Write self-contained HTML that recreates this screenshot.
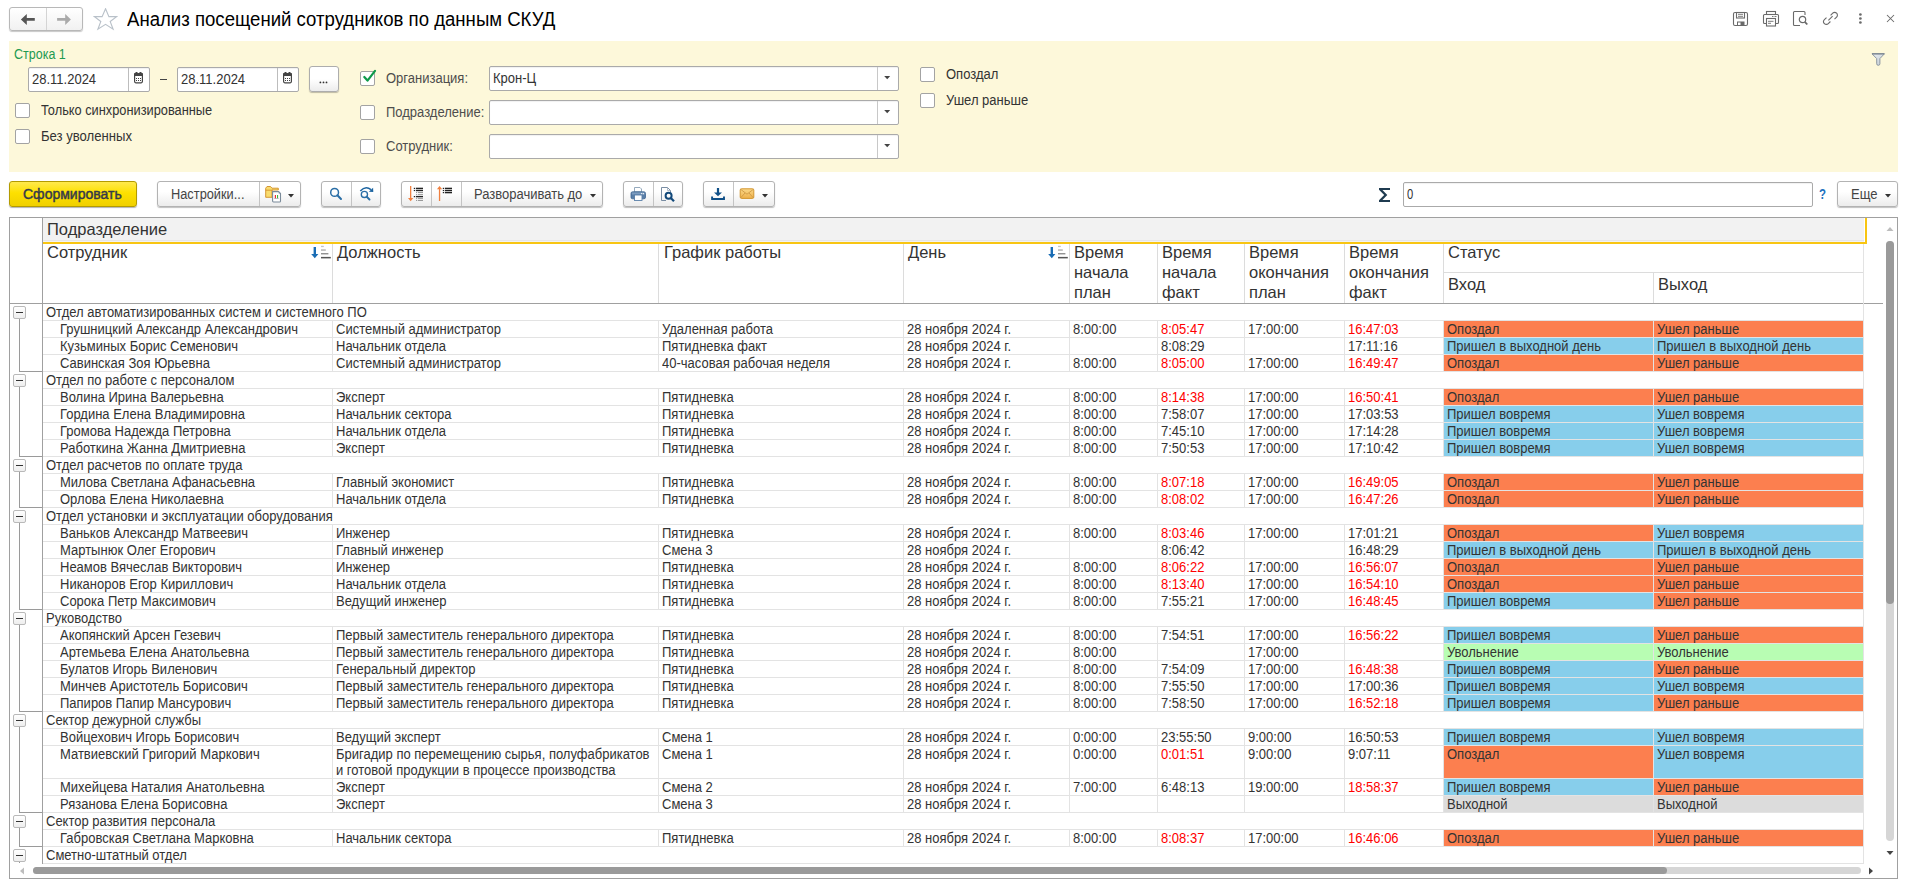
<!DOCTYPE html><html><head><meta charset="utf-8"><style>*{margin:0;padding:0}
html,body{width:1906px;height:882px;overflow:hidden;background:#fff}
body{position:relative;font-family:"Liberation Sans",sans-serif}
.a{position:absolute;box-sizing:content-box}
.t{white-space:nowrap}
.d{font-size:14px;line-height:16px;transform:scaleX(0.9286);transform-origin:0 0}
</style></head><body><div class="a" style="left:9px;top:7px;width:72px;height:22px;border:1px solid #b8b8b8;border-radius:3px;background:linear-gradient(#fff,#f1f1f1);box-shadow:0 1px 1px rgba(0,0,0,.22)"></div><div class="a" style="left:46px;top:8px;width:1px;height:22px;background:#d4d4d4"></div><svg class="a" style="left:20px;top:14px;" width="16" height="12" viewBox="0 0 16 12"><path d="M0.9 5.4 L6.8 0 V4.1 H14.8 V6.8 H6.8 V10.9 Z" fill="#555"/></svg><svg class="a" style="left:57px;top:14px;" width="16" height="12" viewBox="0 0 16 12"><path d="M13.9 5.4 L8.2 0.1 V4.1 H0.1 V6.8 H8.2 V10.9 Z" fill="#aaa"/></svg><svg class="a" style="left:93px;top:8px;" width="25" height="23" viewBox="0 0 25 23"><path d="M12.56 0.7 L15.9 8.6 L23.6 8.6 L17.2 13.5 L20.1 21.2 L12.56 16.3 L4.9 21.2 L7.8 13.5 L1.5 8.6 L9.1 8.6 Z" fill="none" stroke="#b9c1c9" stroke-width="1.1" stroke-linejoin="miter"/></svg><div class="a t" style="left:127px;top:6px;font-size:19.4px;line-height:26px;color:#000;font-weight:400;transform:scaleX(0.9588);transform-origin:0 0;">Анализ посещений сотрудников по данным СКУД</div><svg class="a" style="left:1732px;top:11px;" width="17" height="16" viewBox="0 0 17 16"><rect x="1.5" y="1.5" width="14" height="13" rx="1.5" fill="none" stroke="#6a6a6a" stroke-width="1.1"/><rect x="4.5" y="1.5" width="8" height="5.5" fill="none" stroke="#6a6a6a" stroke-width="1.1"/><line x1="6" y1="3.3" x2="11" y2="3.3" stroke="#6a6a6a" stroke-width="0.9"/><line x1="6" y1="5.3" x2="11" y2="5.3" stroke="#6a6a6a" stroke-width="0.9"/><rect x="5.5" y="11" width="6.5" height="3.5" fill="none" stroke="#6a6a6a" stroke-width="1"/><rect x="8.5" y="11" width="3.5" height="3.5" fill="#6a6a6a"/></svg><svg class="a" style="left:1762px;top:10px;" width="18" height="17" viewBox="0 0 18 17"><rect x="4.5" y="1.5" width="9" height="3" fill="none" stroke="#6a6a6a" stroke-width="1.1"/><path d="M4 13.5 H2.5 A1 1 0 0 1 1.5 12.5 V5.5 A1 1 0 0 1 2.5 4.5 H15.5 A1 1 0 0 1 16.5 5.5 V12.5 A1 1 0 0 1 15.5 13.5 H14" fill="none" stroke="#6a6a6a" stroke-width="1.1"/><rect x="4.5" y="8.5" width="9" height="7.5" fill="#fff" stroke="#6a6a6a" stroke-width="1.1"/><line x1="6" y1="11.3" x2="11.5" y2="11.3" stroke="#6a6a6a" stroke-width="0.9"/><line x1="6" y1="13.3" x2="9" y2="13.3" stroke="#6a6a6a" stroke-width="0.9"/><line x1="10" y1="6.5" x2="11.5" y2="6.5" stroke="#6a6a6a" stroke-width="0.9"/><line x1="12.5" y1="6.5" x2="14.5" y2="6.5" stroke="#6a6a6a" stroke-width="0.9"/></svg><svg class="a" style="left:1792px;top:10px;" width="18" height="17" viewBox="0 0 18 17"><path d="M8 15.5 H2.5 A1 1 0 0 1 1.5 14.5 V2.5 A1 1 0 0 1 2.5 1.5 H12 A1 1 0 0 1 13 2.5 V5" fill="none" stroke="#6a6a6a" stroke-width="1.1"/><circle cx="10.5" cy="9.5" r="3.2" fill="none" stroke="#6a6a6a" stroke-width="1.2"/><line x1="12.8" y1="11.8" x2="15.3" y2="14.5" stroke="#6a6a6a" stroke-width="1.8"/></svg><svg class="a" style="left:1822px;top:10px;" width="17" height="17" viewBox="0 0 17 17"><path d="M6.4 10.4 L10.6 6.2" stroke="#6a6a6a" stroke-width="1.1"/><path d="M8.6 5.3 L10.7 3.2 A2.75 2.75 0 0 1 14.6 7.1 L12.5 9.2" fill="none" stroke="#6a6a6a" stroke-width="1.1"/><path d="M8.4 11.5 L6.3 13.6 A2.75 2.75 0 0 1 2.4 9.7 L4.5 7.6" fill="none" stroke="#6a6a6a" stroke-width="1.1"/></svg><svg class="a" style="left:1857px;top:12px;" width="7" height="13" viewBox="0 0 7 13"><circle cx="3.4" cy="2.5" r="1.35" fill="#6a6a6a"/><circle cx="3.4" cy="6.5" r="1.35" fill="#6a6a6a"/><circle cx="3.4" cy="10.5" r="1.35" fill="#6a6a6a"/></svg><svg class="a" style="left:1886px;top:14px;" width="9" height="9" viewBox="0 0 9 9"><path d="M1 1 L8 8 M8 1 L1 8" stroke="#6a6a6a" stroke-width="1.05"/></svg><div class="a" style="left:9px;top:41px;width:1889px;height:131px;background:#fdf8da"></div><div class="a t" style="left:14px;top:46px;font-size:14px;line-height:16px;color:#1e9a52;font-weight:400;transform:scaleX(0.8929);transform-origin:0 0;">Строка 1</div><div class="a" style="left:28px;top:67px;width:120px;height:23px;border:1px solid #aaa;border-radius:2px;background:#fff;box-shadow:inset 0 1px 1px rgba(0,0,0,.06)"></div><div class="a" style="left:128px;top:68px;width:1px;height:23px;background:#bdbdbd"></div><svg class="a" style="left:134px;top:72px;" width="11" height="12" viewBox="0 0 11 12"><rect x="0.6" y="1.6" width="7.8" height="9.2" rx="1.2" fill="#fff" stroke="#444" stroke-width="1.2"/><rect x="0" y="1" width="9" height="3" rx="1" fill="#444"/><rect x="1.5" y="0" width="2" height="2" fill="#444"/><rect x="5.5" y="0" width="2" height="2" fill="#444"/><g fill="#444"><rect x="2" y="6" width="1" height="1"/><rect x="4" y="6" width="1" height="1"/><rect x="6" y="6" width="1" height="1"/><rect x="2" y="8" width="1" height="1"/><rect x="4" y="8" width="1" height="1"/><rect x="6" y="8" width="1" height="1"/></g></svg><div class="a t" style="left:32px;top:71px;font-size:14px;line-height:16px;color:#333;font-weight:400;transform:scaleX(0.9286);transform-origin:0 0;">28.11.2024</div><div class="a" style="left:160px;top:79px;width:7px;height:1px;background:#444"></div><div class="a" style="left:177px;top:67px;width:120px;height:23px;border:1px solid #aaa;border-radius:2px;background:#fff;box-shadow:inset 0 1px 1px rgba(0,0,0,.06)"></div><div class="a" style="left:277px;top:68px;width:1px;height:23px;background:#bdbdbd"></div><svg class="a" style="left:283px;top:72px;" width="11" height="12" viewBox="0 0 11 12"><rect x="0.6" y="1.6" width="7.8" height="9.2" rx="1.2" fill="#fff" stroke="#444" stroke-width="1.2"/><rect x="0" y="1" width="9" height="3" rx="1" fill="#444"/><rect x="1.5" y="0" width="2" height="2" fill="#444"/><rect x="5.5" y="0" width="2" height="2" fill="#444"/><g fill="#444"><rect x="2" y="6" width="1" height="1"/><rect x="4" y="6" width="1" height="1"/><rect x="6" y="6" width="1" height="1"/><rect x="2" y="8" width="1" height="1"/><rect x="4" y="8" width="1" height="1"/><rect x="6" y="8" width="1" height="1"/></g></svg><div class="a t" style="left:181px;top:71px;font-size:14px;line-height:16px;color:#333;font-weight:400;transform:scaleX(0.9286);transform-origin:0 0;">28.11.2024</div><div class="a" style="left:309px;top:66px;width:30px;height:26px;border:1px solid #adadad;border-radius:3px;background:linear-gradient(#fff 0%,#fff 50%,#ececec 100%);box-shadow:0 1px 1px rgba(0,0,0,.25);box-sizing:border-box"></div><svg class="a" style="left:319px;top:81px;" width="10" height="3" viewBox="0 0 10 3"><circle cx="1.4" cy="1.4" r="0.9" fill="#333"/><circle cx="4.5" cy="1.4" r="0.9" fill="#333"/><circle cx="7.5" cy="1.4" r="0.9" fill="#333"/></svg><div class="a" style="left:15px;top:103px;width:13px;height:13px;border:1px solid #a3a3a3;border-radius:2px;background:#fff"></div><div class="a t" style="left:41px;top:102px;font-size:14px;line-height:16px;color:#333;font-weight:400;transform:scaleX(0.9143);transform-origin:0 0;">Только синхронизированные</div><div class="a" style="left:15px;top:129px;width:13px;height:13px;border:1px solid #a3a3a3;border-radius:2px;background:#fff"></div><div class="a t" style="left:41px;top:128px;font-size:14px;line-height:16px;color:#333;font-weight:400;transform:scaleX(0.9357);transform-origin:0 0;">Без уволенных</div><div class="a" style="left:360px;top:71px;width:13px;height:13px;border:1px solid #a3a3a3;border-radius:2px;background:#fff"></div><svg class="a" style="left:361px;top:68px;" width="16" height="16" viewBox="0 0 16 16"><path d="M3.3 9 L6.5 12.6 L14 2.9" fill="none" stroke="#0e9a4a" stroke-width="2.2" stroke-linecap="round" stroke-linejoin="round"/></svg><div class="a t" style="left:386px;top:70px;font-size:14px;line-height:16px;color:#4d4d4d;font-weight:400;transform:scaleX(0.9286);transform-origin:0 0;">Организация:</div><div class="a" style="left:360px;top:105px;width:13px;height:13px;border:1px solid #a3a3a3;border-radius:2px;background:#fff"></div><div class="a t" style="left:386px;top:104px;font-size:14px;line-height:16px;color:#4d4d4d;font-weight:400;transform:scaleX(0.9286);transform-origin:0 0;">Подразделение:</div><div class="a" style="left:360px;top:139px;width:13px;height:13px;border:1px solid #a3a3a3;border-radius:2px;background:#fff"></div><div class="a t" style="left:386px;top:138px;font-size:14px;line-height:16px;color:#4d4d4d;font-weight:400;transform:scaleX(0.9286);transform-origin:0 0;">Сотрудник:</div><div class="a" style="left:489px;top:66px;width:408px;height:23px;border:1px solid #aaa;border-radius:2px;background:#fff;box-shadow:inset 0 1px 1px rgba(0,0,0,.06)"></div><div class="a" style="left:877px;top:67px;width:1px;height:23px;background:#c8c8c8"></div><svg class="a" style="left:884px;top:76px;" width="7" height="4" viewBox="0 0 7 4"><path d="M0.2 0 H6.2 L3.2 3.3 Z" fill="#444"/></svg><div class="a t" style="left:493px;top:70px;font-size:14px;line-height:16px;color:#333;font-weight:400;transform:scaleX(0.9286);transform-origin:0 0;">Крон-Ц</div><div class="a" style="left:489px;top:100px;width:408px;height:23px;border:1px solid #aaa;border-radius:2px;background:#fff;box-shadow:inset 0 1px 1px rgba(0,0,0,.06)"></div><div class="a" style="left:877px;top:101px;width:1px;height:23px;background:#c8c8c8"></div><svg class="a" style="left:884px;top:110px;" width="7" height="4" viewBox="0 0 7 4"><path d="M0.2 0 H6.2 L3.2 3.3 Z" fill="#444"/></svg><div class="a" style="left:489px;top:134px;width:408px;height:23px;border:1px solid #aaa;border-radius:2px;background:#fff;box-shadow:inset 0 1px 1px rgba(0,0,0,.06)"></div><div class="a" style="left:877px;top:135px;width:1px;height:23px;background:#c8c8c8"></div><svg class="a" style="left:884px;top:144px;" width="7" height="4" viewBox="0 0 7 4"><path d="M0.2 0 H6.2 L3.2 3.3 Z" fill="#444"/></svg><div class="a" style="left:920px;top:67px;width:13px;height:13px;border:1px solid #a3a3a3;border-radius:2px;background:#fff"></div><div class="a t" style="left:946px;top:66px;font-size:14px;line-height:16px;color:#333;font-weight:400;transform:scaleX(0.9286);transform-origin:0 0;">Опоздал</div><div class="a" style="left:920px;top:93px;width:13px;height:13px;border:1px solid #a3a3a3;border-radius:2px;background:#fff"></div><div class="a t" style="left:946px;top:92px;font-size:14px;line-height:16px;color:#333;font-weight:400;transform:scaleX(0.9286);transform-origin:0 0;">Ушел раньше</div><svg class="a" style="left:1870px;top:52px;" width="17" height="15" viewBox="0 0 17 15"><defs><linearGradient id="fg" x1="0" y1="0" x2="1" y2="1"><stop offset="0" stop-color="#e9edf1"/><stop offset="1" stop-color="#c3ccd5"/></linearGradient></defs><path d="M2 1.8 H14.4 L9.9 6.6 V11.7 A1.6 1.6 0 0 1 6.7 11.7 V6.6 Z" fill="url(#fg)" stroke="#87919c" stroke-width="0.95" stroke-linejoin="round"/><line x1="2" y1="1.8" x2="14.4" y2="1.8" stroke="#7d8792" stroke-width="1.3"/></svg><div class="a" style="left:9px;top:181px;width:126px;height:24px;border:1px solid #b39b00;border-radius:3px;background:linear-gradient(#ffe94d 0%,#fde000 45%,#f0d000 100%);box-shadow:0 1px 1px rgba(0,0,0,.3)"></div><div class="a t" style="left:23px;top:186px;font-size:14px;line-height:16px;color:#34394a;font-weight:400;-webkit-text-stroke:0.45px #34394a;">Сформировать</div><div class="a" style="left:157px;top:181px;width:142px;height:24px;border:1px solid #b3b3b3;border-radius:3px;background:linear-gradient(#fff 0%,#fff 40%,#ececec 100%);box-shadow:0 1px 1px rgba(0,0,0,.25)"></div><div class="a" style="left:259px;top:182px;width:1px;height:24px;background:#c4c4c4"></div><div class="a t" style="left:171px;top:186px;font-size:14px;line-height:16px;color:#444;font-weight:400;transform:scaleX(0.9143);transform-origin:0 0;">Настройки...</div><svg class="a" style="left:264px;top:185px;" width="19" height="18" viewBox="0 0 19 18"><path d="M1.7 12.3 V3.2 L3 1.5 H6.5 L8 3.2 H14.3 V5 H8 V12.3 Z" fill="#f9dc6e" stroke="#d3922c" stroke-width="0.95" stroke-linejoin="round"/><line x1="1.7" y1="5.2" x2="8.5" y2="5.2" stroke="#d3922c" stroke-width="0.9"/><path d="M8.6 6.6 H14.6 L16.5 8.5 V16.2 A0.9 0.9 0 0 1 15.6 17 H9.5 A0.9 0.9 0 0 1 8.6 16.1 Z" fill="#fff" stroke="#7a8a99" stroke-width="1.1"/><path d="M14.6 6.6 L16.5 8.5 H14.6 Z" fill="#8a99a8"/><rect x="10.8" y="10" width="1.2" height="3.3" fill="#ee3030"/><rect x="13" y="10" width="1.1" height="3.3" fill="#3cb83c"/><rect x="10.2" y="13.3" width="4.5" height="0.5" fill="#8a7f99"/></svg><svg class="a" style="left:288px;top:194px;" width="7" height="4" viewBox="0 0 7 4"><path d="M0 0 H6 L3 3.5 Z" fill="#333"/></svg><div class="a" style="left:321px;top:181px;width:58px;height:24px;border:1px solid #b3b3b3;border-radius:3px;background:linear-gradient(#fff 0%,#fff 40%,#ececec 100%);box-shadow:0 1px 1px rgba(0,0,0,.25)"></div><div class="a" style="left:351px;top:182px;width:1px;height:24px;background:#c4c4c4"></div><svg class="a" style="left:329px;top:187px;" width="14" height="14" viewBox="0 0 14 14"><circle cx="5.6" cy="5.4" r="3.9" fill="none" stroke="#2a6ea6" stroke-width="1.5"/><line x1="8.4" y1="8.3" x2="12" y2="12" stroke="#2a6ea6" stroke-width="2" stroke-linecap="round"/></svg><svg class="a" style="left:359px;top:186px;" width="16" height="16" viewBox="0 0 16 16"><path d="M1.3 5 Q6.5 -0.8 12 3.6" fill="none" stroke="#1c64a0" stroke-width="1.5"/><path d="M9.8 5.8 L14.1 1.8 L14.3 6.1 Z" fill="#1c64a0"/><circle cx="5.4" cy="8.4" r="3.1" fill="none" stroke="#2a6ea6" stroke-width="1.35"/><line x1="7.7" y1="10.8" x2="10.5" y2="13.5" stroke="#2a6ea6" stroke-width="1.9" stroke-linecap="round"/></svg><div class="a" style="left:401px;top:181px;width:200px;height:24px;border:1px solid #b3b3b3;border-radius:3px;background:linear-gradient(#fff 0%,#fff 40%,#ececec 100%);box-shadow:0 1px 1px rgba(0,0,0,.25)"></div><div class="a" style="left:431px;top:182px;width:1px;height:24px;background:#c4c4c4"></div><div class="a" style="left:461px;top:182px;width:1px;height:24px;background:#c4c4c4"></div><svg class="a" style="left:404px;top:184px;" width="22" height="20" viewBox="0 0 22 20"><rect x="6" y="2" width="1.3" height="13.5" fill="#f08040"/><path d="M4 14 H9.3 L6.65 17.2 Z" fill="#f08040"/><g fill="#222"><rect x="9.8" y="3.8" width="1.2" height="1.2"/><rect x="11.8" y="3.7" width="7.2" height="1.4"/><rect x="9.8" y="5.9" width="1.2" height="1.2"/><rect x="11.8" y="5.8" width="7.2" height="1.4"/><rect x="9.8" y="12" width="1.2" height="1.2"/><rect x="11.8" y="11.9" width="7.2" height="1.4"/></g><g fill="#999"><rect x="12" y="8" width="1" height="1"/><rect x="13.8" y="8" width="5.2" height="1"/><rect x="12" y="9.9" width="1" height="1"/><rect x="13.8" y="9.9" width="5.2" height="1"/><rect x="12" y="14.1" width="1" height="1"/><rect x="13.8" y="14.1" width="5.2" height="1"/><rect x="12" y="16" width="1" height="1"/><rect x="13.8" y="16" width="5.2" height="1"/></g></svg><svg class="a" style="left:433px;top:184px;" width="22" height="20" viewBox="0 0 22 20"><rect x="5.9" y="4" width="1.3" height="13" fill="#f08040"/><path d="M3.9 5.3 H9.2 L6.55 2 Z" fill="#f08040"/><g fill="#222"><rect x="9.8" y="3.8" width="1.2" height="1.2"/><rect x="11.8" y="3.7" width="7.2" height="1.4"/><rect x="9.8" y="5.9" width="1.2" height="1.2"/><rect x="11.8" y="5.8" width="7.2" height="1.4"/><rect x="9.8" y="8" width="1.2" height="1.2"/><rect x="11.8" y="7.9" width="7.2" height="1.4"/></g></svg><div class="a t" style="left:474px;top:186px;font-size:14px;line-height:16px;color:#444;font-weight:400;transform:scaleX(0.9286);transform-origin:0 0;">Разворачивать до</div><svg class="a" style="left:590px;top:194px;" width="7" height="4" viewBox="0 0 7 4"><path d="M0 0 H6 L3 3.5 Z" fill="#333"/></svg><div class="a" style="left:623px;top:181px;width:58px;height:24px;border:1px solid #b3b3b3;border-radius:3px;background:linear-gradient(#fff 0%,#fff 40%,#ececec 100%);box-shadow:0 1px 1px rgba(0,0,0,.25)"></div><div class="a" style="left:653px;top:182px;width:1px;height:24px;background:#c4c4c4"></div><svg class="a" style="left:630px;top:186px;" width="17" height="16" viewBox="0 0 17 16"><path d="M4.5 1.5 H10 L11.5 3 V6 H4.5 Z" fill="#fff" stroke="#8aa0b5" stroke-width="0.9"/><rect x="1" y="5.8" width="14.5" height="7" rx="1.6" fill="#5a7fa8" stroke="#3f6590" stroke-width="0.8"/><rect x="2" y="6.5" width="12.5" height="2" fill="#7e9dc0"/><rect x="11" y="7.2" width="1.2" height="1" fill="#fff"/><rect x="12.8" y="7.2" width="1.2" height="1" fill="#fff"/><rect x="4.5" y="9" width="7.5" height="5.5" fill="#fff" stroke="#5a7fa8" stroke-width="0.9"/></svg><svg class="a" style="left:659px;top:186px;" width="17" height="17" viewBox="0 0 17 17"><path d="M7 14.5 H2.5 V1.5 H8.5 L11.5 4.5 V6.5" fill="none" stroke="#6a8099" stroke-width="0.9"/><path d="M8.5 1.5 V4.5 H11.5" fill="none" stroke="#9aaabb" stroke-width="0.8"/><circle cx="9.6" cy="9.8" r="3" fill="none" stroke="#12497a" stroke-width="2"/><line x1="11.8" y1="12" x2="15" y2="15.3" stroke="#12497a" stroke-width="2.2"/></svg><div class="a" style="left:703px;top:181px;width:70px;height:24px;border:1px solid #b3b3b3;border-radius:3px;background:linear-gradient(#fff 0%,#fff 40%,#ececec 100%);box-shadow:0 1px 1px rgba(0,0,0,.25)"></div><div class="a" style="left:733px;top:182px;width:1px;height:24px;background:#c4c4c4"></div><svg class="a" style="left:710px;top:186px;" width="16" height="16" viewBox="0 0 16 16"><path d="M8 2 V8" stroke="#0f4f88" stroke-width="2.2"/><path d="M4 6.5 L8 10.2 L12 6.5 Z" fill="#0f4f88"/><path d="M2.1 10.5 V13 H14 V10.5" fill="none" stroke="#0f4f88" stroke-width="1.9"/></svg><svg class="a" style="left:739px;top:188px;" width="17" height="12" viewBox="0 0 17 12"><defs><linearGradient id="eg" x1="0" y1="0" x2="0" y2="1"><stop offset="0" stop-color="#fbd98a"/><stop offset="1" stop-color="#eeb04a"/></linearGradient></defs><rect x="1.2" y="0.8" width="13.6" height="9.6" rx="1.3" fill="url(#eg)" stroke="#d3962f" stroke-width="1"/><path d="M1.5 1.2 L8 6.2 L14.5 1.2 M1.5 10 L6 5 M14.5 10 L10 5" fill="none" stroke="#cf9a45" stroke-width="0.9"/></svg><svg class="a" style="left:762px;top:194px;" width="7" height="4" viewBox="0 0 7 4"><path d="M0 0 H6 L3 3.5 Z" fill="#333"/></svg><svg class="a" style="left:1378px;top:188px;" width="13" height="15" viewBox="0 0 13 15"><path d="M1 0 H12 V2 H4.4 L9.3 7 L4.4 12 H12 V14 H1 V12.2 L6.2 7 L1 1.8 Z" fill="#1f3b50"/></svg><div class="a" style="left:1403px;top:182px;width:408px;height:23px;border:1px solid #aaa;border-radius:2px;background:#fff;box-shadow:inset 0 1px 1px rgba(0,0,0,.06)"></div><div class="a t" style="left:1407px;top:186px;font-size:14px;line-height:16px;color:#333;font-weight:400;transform:scaleX(0.8);transform-origin:0 0;">0</div><div class="a t" style="left:1819px;top:186px;font-size:14px;line-height:16px;color:#1f72c0;font-weight:700;transform:scaleX(0.82);transform-origin:0 0;">?</div><div class="a" style="left:1837px;top:181px;width:59px;height:24px;border:1px solid #b3b3b3;border-radius:3px;background:linear-gradient(#fff 0%,#fff 40%,#ececec 100%);box-shadow:0 1px 1px rgba(0,0,0,.25)"></div><div class="a t" style="left:1851px;top:186px;font-size:14px;line-height:16px;color:#444;font-weight:400;transform:scaleX(0.9286);transform-origin:0 0;">Еще</div><svg class="a" style="left:1885px;top:194px;" width="7" height="4" viewBox="0 0 7 4"><path d="M0 0 H6 L3 3.5 Z" fill="#333"/></svg><div class="a" style="left:9px;top:217px;width:1888px;height:661px;border:1px solid #a0a0a0;background:#fff;box-sizing:content-box;width:1887px;height:660px"></div><div class="a" style="left:43px;top:218px;width:1821px;height:24px;background:#f2f2f2"></div><div class="a" style="left:43px;top:240px;width:1821px;height:1px;background:#e6e6e6"></div><div class="a" style="left:43px;top:242px;width:1824px;height:2px;background:#f8c512"></div><div class="a" style="left:1865px;top:218px;width:2px;height:26px;background:#f8c512"></div><div class="a t" style="left:47px;top:219px;font-size:16.5px;line-height:20px;color:#333;font-weight:400;">Подразделение</div><div class="a" style="left:42px;top:218px;width:1px;height:646px;background:#a0a0a0"></div><div class="a" style="left:10px;top:303px;width:1873px;height:1px;background:#a0a0a0"></div><div class="a" style="left:332px;top:244px;width:1px;height:59px;background:#dcdcdc"></div><div class="a" style="left:658px;top:244px;width:1px;height:59px;background:#dcdcdc"></div><div class="a" style="left:903px;top:244px;width:1px;height:59px;background:#dcdcdc"></div><div class="a" style="left:1069px;top:244px;width:1px;height:59px;background:#dcdcdc"></div><div class="a" style="left:1157px;top:244px;width:1px;height:59px;background:#dcdcdc"></div><div class="a" style="left:1244px;top:244px;width:1px;height:59px;background:#dcdcdc"></div><div class="a" style="left:1344px;top:244px;width:1px;height:59px;background:#dcdcdc"></div><div class="a" style="left:1443px;top:244px;width:1px;height:59px;background:#dcdcdc"></div><div class="a" style="left:1863px;top:244px;width:1px;height:59px;background:#dcdcdc"></div><div class="a" style="left:1444px;top:272px;width:420px;height:1px;background:#dcdcdc"></div><div class="a t" style="left:47px;top:242px;font-size:16.5px;line-height:20px;color:#333;font-weight:400;">Сотрудник</div><div class="a t" style="left:337px;top:242px;font-size:16.5px;line-height:20px;color:#333;font-weight:400;">Должность</div><div class="a t" style="left:664px;top:242px;font-size:16.5px;line-height:20px;color:#333;font-weight:400;">График работы</div><div class="a t" style="left:908px;top:242px;font-size:16.5px;line-height:20px;color:#333;font-weight:400;">День</div><div class="a t" style="left:1074px;top:242px;font-size:16.5px;line-height:20px;color:#333;font-weight:400;">Время<br>начала<br>план</div><div class="a t" style="left:1162px;top:242px;font-size:16.5px;line-height:20px;color:#333;font-weight:400;">Время<br>начала<br>факт</div><div class="a t" style="left:1249px;top:242px;font-size:16.5px;line-height:20px;color:#333;font-weight:400;">Время<br>окончания<br>план</div><div class="a t" style="left:1349px;top:242px;font-size:16.5px;line-height:20px;color:#333;font-weight:400;">Время<br>окончания<br>факт</div><div class="a t" style="left:1448px;top:242px;font-size:16.5px;line-height:20px;color:#333;font-weight:400;">Статус</div><div class="a t" style="left:1448px;top:274px;font-size:16.5px;line-height:20px;color:#333;font-weight:400;">Вход</div><div class="a t" style="left:1658px;top:274px;font-size:16.5px;line-height:20px;color:#333;font-weight:400;">Выход</div><div class="a" style="left:1653px;top:273px;width:1px;height:30px;background:#dcdcdc"></div><svg class="a" style="left:309px;top:244px;" width="24" height="16" viewBox="0 0 24 16"><rect x="4.6" y="3" width="2.4" height="8" fill="#1a6db5"/><path d="M2.2 10 H9.4 L5.8 14.2 Z" fill="#1a6db5"/><rect x="12" y="1.8" width="2.8" height="1.3" fill="#c4c4c4"/><rect x="12" y="5.4" width="4.8" height="1.3" fill="#a8a8a8"/><rect x="12" y="9.1" width="7.4" height="1.3" fill="#888"/><rect x="12" y="12.9" width="9.8" height="1.5" fill="#555"/></svg><svg class="a" style="left:1046px;top:244px;" width="24" height="16" viewBox="0 0 24 16"><rect x="4.6" y="3" width="2.4" height="8" fill="#1a6db5"/><path d="M2.2 10 H9.4 L5.8 14.2 Z" fill="#1a6db5"/><rect x="12" y="1.8" width="2.8" height="1.3" fill="#c4c4c4"/><rect x="12" y="5.4" width="4.8" height="1.3" fill="#a8a8a8"/><rect x="12" y="9.1" width="7.4" height="1.3" fill="#888"/><rect x="12" y="12.9" width="9.8" height="1.5" fill="#555"/></svg><div class="a t d" style="left:46px;top:304px;color:#333">Отдел автоматизированных систем и системного ПО</div><div class="a" style="left:43px;top:320px;width:1821px;height:1px;background:#e3e3e3"></div><div class="a" style="left:1444px;top:321px;width:209px;height:16px;background:#fc7f4f"></div><div class="a" style="left:1654px;top:321px;width:209px;height:16px;background:#fc7f4f"></div><div class="a t d" style="left:60px;top:321px;color:#333">Грушницкий Александр Александрович</div><div class="a t d" style="left:336px;top:321px;color:#333">Системный администратор</div><div class="a t d" style="left:662px;top:321px;color:#333">Удаленная работа</div><div class="a t d" style="left:907px;top:321px;color:#333">28 ноября 2024 г.</div><div class="a t d" style="left:1073px;top:321px;color:#333">8:00:00</div><div class="a t d" style="left:1161px;top:321px;color:#f00">8:05:47</div><div class="a t d" style="left:1248px;top:321px;color:#333">17:00:00</div><div class="a t d" style="left:1348px;top:321px;color:#f00">16:47:03</div><div class="a t d" style="left:1447px;top:321px;color:#333">Опоздал</div><div class="a t d" style="left:1657px;top:321px;color:#333">Ушел раньше</div><div class="a" style="left:332px;top:321px;width:1px;height:16px;background:#e3e3e3"></div><div class="a" style="left:658px;top:321px;width:1px;height:16px;background:#e3e3e3"></div><div class="a" style="left:903px;top:321px;width:1px;height:16px;background:#e3e3e3"></div><div class="a" style="left:1069px;top:321px;width:1px;height:16px;background:#e3e3e3"></div><div class="a" style="left:1157px;top:321px;width:1px;height:16px;background:#e3e3e3"></div><div class="a" style="left:1244px;top:321px;width:1px;height:16px;background:#e3e3e3"></div><div class="a" style="left:1344px;top:321px;width:1px;height:16px;background:#e3e3e3"></div><div class="a" style="left:1443px;top:321px;width:1px;height:16px;background:#e3e3e3"></div><div class="a" style="left:1653px;top:321px;width:1px;height:16px;background:#e3e3e3"></div><div class="a" style="left:1863px;top:321px;width:1px;height:16px;background:#e3e3e3"></div><div class="a" style="left:43px;top:337px;width:1821px;height:1px;background:#e3e3e3"></div><div class="a" style="left:1444px;top:338px;width:209px;height:16px;background:#87ceeb"></div><div class="a" style="left:1654px;top:338px;width:209px;height:16px;background:#87ceeb"></div><div class="a t d" style="left:60px;top:338px;color:#333">Кузьминых Борис Семенович</div><div class="a t d" style="left:336px;top:338px;color:#333">Начальник отдела</div><div class="a t d" style="left:662px;top:338px;color:#333">Пятидневка факт</div><div class="a t d" style="left:907px;top:338px;color:#333">28 ноября 2024 г.</div><div class="a t d" style="left:1161px;top:338px;color:#333">8:08:29</div><div class="a t d" style="left:1348px;top:338px;color:#333">17:11:16</div><div class="a t d" style="left:1447px;top:338px;color:#333">Пришел в выходной день</div><div class="a t d" style="left:1657px;top:338px;color:#333">Пришел в выходной день</div><div class="a" style="left:332px;top:338px;width:1px;height:16px;background:#e3e3e3"></div><div class="a" style="left:658px;top:338px;width:1px;height:16px;background:#e3e3e3"></div><div class="a" style="left:903px;top:338px;width:1px;height:16px;background:#e3e3e3"></div><div class="a" style="left:1069px;top:338px;width:1px;height:16px;background:#e3e3e3"></div><div class="a" style="left:1157px;top:338px;width:1px;height:16px;background:#e3e3e3"></div><div class="a" style="left:1244px;top:338px;width:1px;height:16px;background:#e3e3e3"></div><div class="a" style="left:1344px;top:338px;width:1px;height:16px;background:#e3e3e3"></div><div class="a" style="left:1443px;top:338px;width:1px;height:16px;background:#e3e3e3"></div><div class="a" style="left:1653px;top:338px;width:1px;height:16px;background:#e3e3e3"></div><div class="a" style="left:1863px;top:338px;width:1px;height:16px;background:#e3e3e3"></div><div class="a" style="left:43px;top:354px;width:1821px;height:1px;background:#e3e3e3"></div><div class="a" style="left:1444px;top:355px;width:209px;height:16px;background:#fc7f4f"></div><div class="a" style="left:1654px;top:355px;width:209px;height:16px;background:#fc7f4f"></div><div class="a t d" style="left:60px;top:355px;color:#333">Савинская Зоя Юрьевна</div><div class="a t d" style="left:336px;top:355px;color:#333">Системный администратор</div><div class="a t d" style="left:662px;top:355px;color:#333">40-часовая рабочая неделя</div><div class="a t d" style="left:907px;top:355px;color:#333">28 ноября 2024 г.</div><div class="a t d" style="left:1073px;top:355px;color:#333">8:00:00</div><div class="a t d" style="left:1161px;top:355px;color:#f00">8:05:00</div><div class="a t d" style="left:1248px;top:355px;color:#333">17:00:00</div><div class="a t d" style="left:1348px;top:355px;color:#f00">16:49:47</div><div class="a t d" style="left:1447px;top:355px;color:#333">Опоздал</div><div class="a t d" style="left:1657px;top:355px;color:#333">Ушел раньше</div><div class="a" style="left:332px;top:355px;width:1px;height:16px;background:#e3e3e3"></div><div class="a" style="left:658px;top:355px;width:1px;height:16px;background:#e3e3e3"></div><div class="a" style="left:903px;top:355px;width:1px;height:16px;background:#e3e3e3"></div><div class="a" style="left:1069px;top:355px;width:1px;height:16px;background:#e3e3e3"></div><div class="a" style="left:1157px;top:355px;width:1px;height:16px;background:#e3e3e3"></div><div class="a" style="left:1244px;top:355px;width:1px;height:16px;background:#e3e3e3"></div><div class="a" style="left:1344px;top:355px;width:1px;height:16px;background:#e3e3e3"></div><div class="a" style="left:1443px;top:355px;width:1px;height:16px;background:#e3e3e3"></div><div class="a" style="left:1653px;top:355px;width:1px;height:16px;background:#e3e3e3"></div><div class="a" style="left:1863px;top:355px;width:1px;height:16px;background:#e3e3e3"></div><div class="a" style="left:43px;top:371px;width:1821px;height:1px;background:#e3e3e3"></div><div class="a t d" style="left:46px;top:372px;color:#333">Отдел по работе с персоналом</div><div class="a" style="left:43px;top:388px;width:1821px;height:1px;background:#e3e3e3"></div><div class="a" style="left:1444px;top:389px;width:209px;height:16px;background:#fc7f4f"></div><div class="a" style="left:1654px;top:389px;width:209px;height:16px;background:#fc7f4f"></div><div class="a t d" style="left:60px;top:389px;color:#333">Волина Ирина Валерьевна</div><div class="a t d" style="left:336px;top:389px;color:#333">Эксперт</div><div class="a t d" style="left:662px;top:389px;color:#333">Пятидневка</div><div class="a t d" style="left:907px;top:389px;color:#333">28 ноября 2024 г.</div><div class="a t d" style="left:1073px;top:389px;color:#333">8:00:00</div><div class="a t d" style="left:1161px;top:389px;color:#f00">8:14:38</div><div class="a t d" style="left:1248px;top:389px;color:#333">17:00:00</div><div class="a t d" style="left:1348px;top:389px;color:#f00">16:50:41</div><div class="a t d" style="left:1447px;top:389px;color:#333">Опоздал</div><div class="a t d" style="left:1657px;top:389px;color:#333">Ушел раньше</div><div class="a" style="left:332px;top:389px;width:1px;height:16px;background:#e3e3e3"></div><div class="a" style="left:658px;top:389px;width:1px;height:16px;background:#e3e3e3"></div><div class="a" style="left:903px;top:389px;width:1px;height:16px;background:#e3e3e3"></div><div class="a" style="left:1069px;top:389px;width:1px;height:16px;background:#e3e3e3"></div><div class="a" style="left:1157px;top:389px;width:1px;height:16px;background:#e3e3e3"></div><div class="a" style="left:1244px;top:389px;width:1px;height:16px;background:#e3e3e3"></div><div class="a" style="left:1344px;top:389px;width:1px;height:16px;background:#e3e3e3"></div><div class="a" style="left:1443px;top:389px;width:1px;height:16px;background:#e3e3e3"></div><div class="a" style="left:1653px;top:389px;width:1px;height:16px;background:#e3e3e3"></div><div class="a" style="left:1863px;top:389px;width:1px;height:16px;background:#e3e3e3"></div><div class="a" style="left:43px;top:405px;width:1821px;height:1px;background:#e3e3e3"></div><div class="a" style="left:1444px;top:406px;width:209px;height:16px;background:#87ceeb"></div><div class="a" style="left:1654px;top:406px;width:209px;height:16px;background:#87ceeb"></div><div class="a t d" style="left:60px;top:406px;color:#333">Гордина Елена Владимировна</div><div class="a t d" style="left:336px;top:406px;color:#333">Начальник сектора</div><div class="a t d" style="left:662px;top:406px;color:#333">Пятидневка</div><div class="a t d" style="left:907px;top:406px;color:#333">28 ноября 2024 г.</div><div class="a t d" style="left:1073px;top:406px;color:#333">8:00:00</div><div class="a t d" style="left:1161px;top:406px;color:#333">7:58:07</div><div class="a t d" style="left:1248px;top:406px;color:#333">17:00:00</div><div class="a t d" style="left:1348px;top:406px;color:#333">17:03:53</div><div class="a t d" style="left:1447px;top:406px;color:#333">Пришел вовремя</div><div class="a t d" style="left:1657px;top:406px;color:#333">Ушел вовремя</div><div class="a" style="left:332px;top:406px;width:1px;height:16px;background:#e3e3e3"></div><div class="a" style="left:658px;top:406px;width:1px;height:16px;background:#e3e3e3"></div><div class="a" style="left:903px;top:406px;width:1px;height:16px;background:#e3e3e3"></div><div class="a" style="left:1069px;top:406px;width:1px;height:16px;background:#e3e3e3"></div><div class="a" style="left:1157px;top:406px;width:1px;height:16px;background:#e3e3e3"></div><div class="a" style="left:1244px;top:406px;width:1px;height:16px;background:#e3e3e3"></div><div class="a" style="left:1344px;top:406px;width:1px;height:16px;background:#e3e3e3"></div><div class="a" style="left:1443px;top:406px;width:1px;height:16px;background:#e3e3e3"></div><div class="a" style="left:1653px;top:406px;width:1px;height:16px;background:#e3e3e3"></div><div class="a" style="left:1863px;top:406px;width:1px;height:16px;background:#e3e3e3"></div><div class="a" style="left:43px;top:422px;width:1821px;height:1px;background:#e3e3e3"></div><div class="a" style="left:1444px;top:423px;width:209px;height:16px;background:#87ceeb"></div><div class="a" style="left:1654px;top:423px;width:209px;height:16px;background:#87ceeb"></div><div class="a t d" style="left:60px;top:423px;color:#333">Громова Надежда Петровна</div><div class="a t d" style="left:336px;top:423px;color:#333">Начальник отдела</div><div class="a t d" style="left:662px;top:423px;color:#333">Пятидневка</div><div class="a t d" style="left:907px;top:423px;color:#333">28 ноября 2024 г.</div><div class="a t d" style="left:1073px;top:423px;color:#333">8:00:00</div><div class="a t d" style="left:1161px;top:423px;color:#333">7:45:10</div><div class="a t d" style="left:1248px;top:423px;color:#333">17:00:00</div><div class="a t d" style="left:1348px;top:423px;color:#333">17:14:28</div><div class="a t d" style="left:1447px;top:423px;color:#333">Пришел вовремя</div><div class="a t d" style="left:1657px;top:423px;color:#333">Ушел вовремя</div><div class="a" style="left:332px;top:423px;width:1px;height:16px;background:#e3e3e3"></div><div class="a" style="left:658px;top:423px;width:1px;height:16px;background:#e3e3e3"></div><div class="a" style="left:903px;top:423px;width:1px;height:16px;background:#e3e3e3"></div><div class="a" style="left:1069px;top:423px;width:1px;height:16px;background:#e3e3e3"></div><div class="a" style="left:1157px;top:423px;width:1px;height:16px;background:#e3e3e3"></div><div class="a" style="left:1244px;top:423px;width:1px;height:16px;background:#e3e3e3"></div><div class="a" style="left:1344px;top:423px;width:1px;height:16px;background:#e3e3e3"></div><div class="a" style="left:1443px;top:423px;width:1px;height:16px;background:#e3e3e3"></div><div class="a" style="left:1653px;top:423px;width:1px;height:16px;background:#e3e3e3"></div><div class="a" style="left:1863px;top:423px;width:1px;height:16px;background:#e3e3e3"></div><div class="a" style="left:43px;top:439px;width:1821px;height:1px;background:#e3e3e3"></div><div class="a" style="left:1444px;top:440px;width:209px;height:16px;background:#87ceeb"></div><div class="a" style="left:1654px;top:440px;width:209px;height:16px;background:#87ceeb"></div><div class="a t d" style="left:60px;top:440px;color:#333">Работкина Жанна Дмитриевна</div><div class="a t d" style="left:336px;top:440px;color:#333">Эксперт</div><div class="a t d" style="left:662px;top:440px;color:#333">Пятидневка</div><div class="a t d" style="left:907px;top:440px;color:#333">28 ноября 2024 г.</div><div class="a t d" style="left:1073px;top:440px;color:#333">8:00:00</div><div class="a t d" style="left:1161px;top:440px;color:#333">7:50:53</div><div class="a t d" style="left:1248px;top:440px;color:#333">17:00:00</div><div class="a t d" style="left:1348px;top:440px;color:#333">17:10:42</div><div class="a t d" style="left:1447px;top:440px;color:#333">Пришел вовремя</div><div class="a t d" style="left:1657px;top:440px;color:#333">Ушел вовремя</div><div class="a" style="left:332px;top:440px;width:1px;height:16px;background:#e3e3e3"></div><div class="a" style="left:658px;top:440px;width:1px;height:16px;background:#e3e3e3"></div><div class="a" style="left:903px;top:440px;width:1px;height:16px;background:#e3e3e3"></div><div class="a" style="left:1069px;top:440px;width:1px;height:16px;background:#e3e3e3"></div><div class="a" style="left:1157px;top:440px;width:1px;height:16px;background:#e3e3e3"></div><div class="a" style="left:1244px;top:440px;width:1px;height:16px;background:#e3e3e3"></div><div class="a" style="left:1344px;top:440px;width:1px;height:16px;background:#e3e3e3"></div><div class="a" style="left:1443px;top:440px;width:1px;height:16px;background:#e3e3e3"></div><div class="a" style="left:1653px;top:440px;width:1px;height:16px;background:#e3e3e3"></div><div class="a" style="left:1863px;top:440px;width:1px;height:16px;background:#e3e3e3"></div><div class="a" style="left:43px;top:456px;width:1821px;height:1px;background:#e3e3e3"></div><div class="a t d" style="left:46px;top:457px;color:#333">Отдел расчетов по оплате труда</div><div class="a" style="left:43px;top:473px;width:1821px;height:1px;background:#e3e3e3"></div><div class="a" style="left:1444px;top:474px;width:209px;height:16px;background:#fc7f4f"></div><div class="a" style="left:1654px;top:474px;width:209px;height:16px;background:#fc7f4f"></div><div class="a t d" style="left:60px;top:474px;color:#333">Милова Светлана Афанасьевна</div><div class="a t d" style="left:336px;top:474px;color:#333">Главный экономист</div><div class="a t d" style="left:662px;top:474px;color:#333">Пятидневка</div><div class="a t d" style="left:907px;top:474px;color:#333">28 ноября 2024 г.</div><div class="a t d" style="left:1073px;top:474px;color:#333">8:00:00</div><div class="a t d" style="left:1161px;top:474px;color:#f00">8:07:18</div><div class="a t d" style="left:1248px;top:474px;color:#333">17:00:00</div><div class="a t d" style="left:1348px;top:474px;color:#f00">16:49:05</div><div class="a t d" style="left:1447px;top:474px;color:#333">Опоздал</div><div class="a t d" style="left:1657px;top:474px;color:#333">Ушел раньше</div><div class="a" style="left:332px;top:474px;width:1px;height:16px;background:#e3e3e3"></div><div class="a" style="left:658px;top:474px;width:1px;height:16px;background:#e3e3e3"></div><div class="a" style="left:903px;top:474px;width:1px;height:16px;background:#e3e3e3"></div><div class="a" style="left:1069px;top:474px;width:1px;height:16px;background:#e3e3e3"></div><div class="a" style="left:1157px;top:474px;width:1px;height:16px;background:#e3e3e3"></div><div class="a" style="left:1244px;top:474px;width:1px;height:16px;background:#e3e3e3"></div><div class="a" style="left:1344px;top:474px;width:1px;height:16px;background:#e3e3e3"></div><div class="a" style="left:1443px;top:474px;width:1px;height:16px;background:#e3e3e3"></div><div class="a" style="left:1653px;top:474px;width:1px;height:16px;background:#e3e3e3"></div><div class="a" style="left:1863px;top:474px;width:1px;height:16px;background:#e3e3e3"></div><div class="a" style="left:43px;top:490px;width:1821px;height:1px;background:#e3e3e3"></div><div class="a" style="left:1444px;top:491px;width:209px;height:16px;background:#fc7f4f"></div><div class="a" style="left:1654px;top:491px;width:209px;height:16px;background:#fc7f4f"></div><div class="a t d" style="left:60px;top:491px;color:#333">Орлова Елена Николаевна</div><div class="a t d" style="left:336px;top:491px;color:#333">Начальник отдела</div><div class="a t d" style="left:662px;top:491px;color:#333">Пятидневка</div><div class="a t d" style="left:907px;top:491px;color:#333">28 ноября 2024 г.</div><div class="a t d" style="left:1073px;top:491px;color:#333">8:00:00</div><div class="a t d" style="left:1161px;top:491px;color:#f00">8:08:02</div><div class="a t d" style="left:1248px;top:491px;color:#333">17:00:00</div><div class="a t d" style="left:1348px;top:491px;color:#f00">16:47:26</div><div class="a t d" style="left:1447px;top:491px;color:#333">Опоздал</div><div class="a t d" style="left:1657px;top:491px;color:#333">Ушел раньше</div><div class="a" style="left:332px;top:491px;width:1px;height:16px;background:#e3e3e3"></div><div class="a" style="left:658px;top:491px;width:1px;height:16px;background:#e3e3e3"></div><div class="a" style="left:903px;top:491px;width:1px;height:16px;background:#e3e3e3"></div><div class="a" style="left:1069px;top:491px;width:1px;height:16px;background:#e3e3e3"></div><div class="a" style="left:1157px;top:491px;width:1px;height:16px;background:#e3e3e3"></div><div class="a" style="left:1244px;top:491px;width:1px;height:16px;background:#e3e3e3"></div><div class="a" style="left:1344px;top:491px;width:1px;height:16px;background:#e3e3e3"></div><div class="a" style="left:1443px;top:491px;width:1px;height:16px;background:#e3e3e3"></div><div class="a" style="left:1653px;top:491px;width:1px;height:16px;background:#e3e3e3"></div><div class="a" style="left:1863px;top:491px;width:1px;height:16px;background:#e3e3e3"></div><div class="a" style="left:43px;top:507px;width:1821px;height:1px;background:#e3e3e3"></div><div class="a t d" style="left:46px;top:508px;color:#333">Отдел установки и эксплуатации оборудования</div><div class="a" style="left:43px;top:524px;width:1821px;height:1px;background:#e3e3e3"></div><div class="a" style="left:1444px;top:525px;width:209px;height:16px;background:#fc7f4f"></div><div class="a" style="left:1654px;top:525px;width:209px;height:16px;background:#87ceeb"></div><div class="a t d" style="left:60px;top:525px;color:#333">Ваньков Александр Матвеевич</div><div class="a t d" style="left:336px;top:525px;color:#333">Инженер</div><div class="a t d" style="left:662px;top:525px;color:#333">Пятидневка</div><div class="a t d" style="left:907px;top:525px;color:#333">28 ноября 2024 г.</div><div class="a t d" style="left:1073px;top:525px;color:#333">8:00:00</div><div class="a t d" style="left:1161px;top:525px;color:#f00">8:03:46</div><div class="a t d" style="left:1248px;top:525px;color:#333">17:00:00</div><div class="a t d" style="left:1348px;top:525px;color:#333">17:01:21</div><div class="a t d" style="left:1447px;top:525px;color:#333">Опоздал</div><div class="a t d" style="left:1657px;top:525px;color:#333">Ушел вовремя</div><div class="a" style="left:332px;top:525px;width:1px;height:16px;background:#e3e3e3"></div><div class="a" style="left:658px;top:525px;width:1px;height:16px;background:#e3e3e3"></div><div class="a" style="left:903px;top:525px;width:1px;height:16px;background:#e3e3e3"></div><div class="a" style="left:1069px;top:525px;width:1px;height:16px;background:#e3e3e3"></div><div class="a" style="left:1157px;top:525px;width:1px;height:16px;background:#e3e3e3"></div><div class="a" style="left:1244px;top:525px;width:1px;height:16px;background:#e3e3e3"></div><div class="a" style="left:1344px;top:525px;width:1px;height:16px;background:#e3e3e3"></div><div class="a" style="left:1443px;top:525px;width:1px;height:16px;background:#e3e3e3"></div><div class="a" style="left:1653px;top:525px;width:1px;height:16px;background:#e3e3e3"></div><div class="a" style="left:1863px;top:525px;width:1px;height:16px;background:#e3e3e3"></div><div class="a" style="left:43px;top:541px;width:1821px;height:1px;background:#e3e3e3"></div><div class="a" style="left:1444px;top:542px;width:209px;height:16px;background:#87ceeb"></div><div class="a" style="left:1654px;top:542px;width:209px;height:16px;background:#87ceeb"></div><div class="a t d" style="left:60px;top:542px;color:#333">Мартынюк Олег Егорович</div><div class="a t d" style="left:336px;top:542px;color:#333">Главный инженер</div><div class="a t d" style="left:662px;top:542px;color:#333">Смена 3</div><div class="a t d" style="left:907px;top:542px;color:#333">28 ноября 2024 г.</div><div class="a t d" style="left:1161px;top:542px;color:#333">8:06:42</div><div class="a t d" style="left:1348px;top:542px;color:#333">16:48:29</div><div class="a t d" style="left:1447px;top:542px;color:#333">Пришел в выходной день</div><div class="a t d" style="left:1657px;top:542px;color:#333">Пришел в выходной день</div><div class="a" style="left:332px;top:542px;width:1px;height:16px;background:#e3e3e3"></div><div class="a" style="left:658px;top:542px;width:1px;height:16px;background:#e3e3e3"></div><div class="a" style="left:903px;top:542px;width:1px;height:16px;background:#e3e3e3"></div><div class="a" style="left:1069px;top:542px;width:1px;height:16px;background:#e3e3e3"></div><div class="a" style="left:1157px;top:542px;width:1px;height:16px;background:#e3e3e3"></div><div class="a" style="left:1244px;top:542px;width:1px;height:16px;background:#e3e3e3"></div><div class="a" style="left:1344px;top:542px;width:1px;height:16px;background:#e3e3e3"></div><div class="a" style="left:1443px;top:542px;width:1px;height:16px;background:#e3e3e3"></div><div class="a" style="left:1653px;top:542px;width:1px;height:16px;background:#e3e3e3"></div><div class="a" style="left:1863px;top:542px;width:1px;height:16px;background:#e3e3e3"></div><div class="a" style="left:43px;top:558px;width:1821px;height:1px;background:#e3e3e3"></div><div class="a" style="left:1444px;top:559px;width:209px;height:16px;background:#fc7f4f"></div><div class="a" style="left:1654px;top:559px;width:209px;height:16px;background:#fc7f4f"></div><div class="a t d" style="left:60px;top:559px;color:#333">Неамов Вячеслав Викторович</div><div class="a t d" style="left:336px;top:559px;color:#333">Инженер</div><div class="a t d" style="left:662px;top:559px;color:#333">Пятидневка</div><div class="a t d" style="left:907px;top:559px;color:#333">28 ноября 2024 г.</div><div class="a t d" style="left:1073px;top:559px;color:#333">8:00:00</div><div class="a t d" style="left:1161px;top:559px;color:#f00">8:06:22</div><div class="a t d" style="left:1248px;top:559px;color:#333">17:00:00</div><div class="a t d" style="left:1348px;top:559px;color:#f00">16:56:07</div><div class="a t d" style="left:1447px;top:559px;color:#333">Опоздал</div><div class="a t d" style="left:1657px;top:559px;color:#333">Ушел раньше</div><div class="a" style="left:332px;top:559px;width:1px;height:16px;background:#e3e3e3"></div><div class="a" style="left:658px;top:559px;width:1px;height:16px;background:#e3e3e3"></div><div class="a" style="left:903px;top:559px;width:1px;height:16px;background:#e3e3e3"></div><div class="a" style="left:1069px;top:559px;width:1px;height:16px;background:#e3e3e3"></div><div class="a" style="left:1157px;top:559px;width:1px;height:16px;background:#e3e3e3"></div><div class="a" style="left:1244px;top:559px;width:1px;height:16px;background:#e3e3e3"></div><div class="a" style="left:1344px;top:559px;width:1px;height:16px;background:#e3e3e3"></div><div class="a" style="left:1443px;top:559px;width:1px;height:16px;background:#e3e3e3"></div><div class="a" style="left:1653px;top:559px;width:1px;height:16px;background:#e3e3e3"></div><div class="a" style="left:1863px;top:559px;width:1px;height:16px;background:#e3e3e3"></div><div class="a" style="left:43px;top:575px;width:1821px;height:1px;background:#e3e3e3"></div><div class="a" style="left:1444px;top:576px;width:209px;height:16px;background:#fc7f4f"></div><div class="a" style="left:1654px;top:576px;width:209px;height:16px;background:#fc7f4f"></div><div class="a t d" style="left:60px;top:576px;color:#333">Никаноров Егор Кириллович</div><div class="a t d" style="left:336px;top:576px;color:#333">Начальник отдела</div><div class="a t d" style="left:662px;top:576px;color:#333">Пятидневка</div><div class="a t d" style="left:907px;top:576px;color:#333">28 ноября 2024 г.</div><div class="a t d" style="left:1073px;top:576px;color:#333">8:00:00</div><div class="a t d" style="left:1161px;top:576px;color:#f00">8:13:40</div><div class="a t d" style="left:1248px;top:576px;color:#333">17:00:00</div><div class="a t d" style="left:1348px;top:576px;color:#f00">16:54:10</div><div class="a t d" style="left:1447px;top:576px;color:#333">Опоздал</div><div class="a t d" style="left:1657px;top:576px;color:#333">Ушел раньше</div><div class="a" style="left:332px;top:576px;width:1px;height:16px;background:#e3e3e3"></div><div class="a" style="left:658px;top:576px;width:1px;height:16px;background:#e3e3e3"></div><div class="a" style="left:903px;top:576px;width:1px;height:16px;background:#e3e3e3"></div><div class="a" style="left:1069px;top:576px;width:1px;height:16px;background:#e3e3e3"></div><div class="a" style="left:1157px;top:576px;width:1px;height:16px;background:#e3e3e3"></div><div class="a" style="left:1244px;top:576px;width:1px;height:16px;background:#e3e3e3"></div><div class="a" style="left:1344px;top:576px;width:1px;height:16px;background:#e3e3e3"></div><div class="a" style="left:1443px;top:576px;width:1px;height:16px;background:#e3e3e3"></div><div class="a" style="left:1653px;top:576px;width:1px;height:16px;background:#e3e3e3"></div><div class="a" style="left:1863px;top:576px;width:1px;height:16px;background:#e3e3e3"></div><div class="a" style="left:43px;top:592px;width:1821px;height:1px;background:#e3e3e3"></div><div class="a" style="left:1444px;top:593px;width:209px;height:16px;background:#87ceeb"></div><div class="a" style="left:1654px;top:593px;width:209px;height:16px;background:#fc7f4f"></div><div class="a t d" style="left:60px;top:593px;color:#333">Сорока Петр Максимович</div><div class="a t d" style="left:336px;top:593px;color:#333">Ведущий инженер</div><div class="a t d" style="left:662px;top:593px;color:#333">Пятидневка</div><div class="a t d" style="left:907px;top:593px;color:#333">28 ноября 2024 г.</div><div class="a t d" style="left:1073px;top:593px;color:#333">8:00:00</div><div class="a t d" style="left:1161px;top:593px;color:#333">7:55:21</div><div class="a t d" style="left:1248px;top:593px;color:#333">17:00:00</div><div class="a t d" style="left:1348px;top:593px;color:#f00">16:48:45</div><div class="a t d" style="left:1447px;top:593px;color:#333">Пришел вовремя</div><div class="a t d" style="left:1657px;top:593px;color:#333">Ушел раньше</div><div class="a" style="left:332px;top:593px;width:1px;height:16px;background:#e3e3e3"></div><div class="a" style="left:658px;top:593px;width:1px;height:16px;background:#e3e3e3"></div><div class="a" style="left:903px;top:593px;width:1px;height:16px;background:#e3e3e3"></div><div class="a" style="left:1069px;top:593px;width:1px;height:16px;background:#e3e3e3"></div><div class="a" style="left:1157px;top:593px;width:1px;height:16px;background:#e3e3e3"></div><div class="a" style="left:1244px;top:593px;width:1px;height:16px;background:#e3e3e3"></div><div class="a" style="left:1344px;top:593px;width:1px;height:16px;background:#e3e3e3"></div><div class="a" style="left:1443px;top:593px;width:1px;height:16px;background:#e3e3e3"></div><div class="a" style="left:1653px;top:593px;width:1px;height:16px;background:#e3e3e3"></div><div class="a" style="left:1863px;top:593px;width:1px;height:16px;background:#e3e3e3"></div><div class="a" style="left:43px;top:609px;width:1821px;height:1px;background:#e3e3e3"></div><div class="a t d" style="left:46px;top:610px;color:#333">Руководство</div><div class="a" style="left:43px;top:626px;width:1821px;height:1px;background:#e3e3e3"></div><div class="a" style="left:1444px;top:627px;width:209px;height:16px;background:#87ceeb"></div><div class="a" style="left:1654px;top:627px;width:209px;height:16px;background:#fc7f4f"></div><div class="a t d" style="left:60px;top:627px;color:#333">Акопянский Арсен Гезевич</div><div class="a t d" style="left:336px;top:627px;color:#333">Первый заместитель генерального директора</div><div class="a t d" style="left:662px;top:627px;color:#333">Пятидневка</div><div class="a t d" style="left:907px;top:627px;color:#333">28 ноября 2024 г.</div><div class="a t d" style="left:1073px;top:627px;color:#333">8:00:00</div><div class="a t d" style="left:1161px;top:627px;color:#333">7:54:51</div><div class="a t d" style="left:1248px;top:627px;color:#333">17:00:00</div><div class="a t d" style="left:1348px;top:627px;color:#f00">16:56:22</div><div class="a t d" style="left:1447px;top:627px;color:#333">Пришел вовремя</div><div class="a t d" style="left:1657px;top:627px;color:#333">Ушел раньше</div><div class="a" style="left:332px;top:627px;width:1px;height:16px;background:#e3e3e3"></div><div class="a" style="left:658px;top:627px;width:1px;height:16px;background:#e3e3e3"></div><div class="a" style="left:903px;top:627px;width:1px;height:16px;background:#e3e3e3"></div><div class="a" style="left:1069px;top:627px;width:1px;height:16px;background:#e3e3e3"></div><div class="a" style="left:1157px;top:627px;width:1px;height:16px;background:#e3e3e3"></div><div class="a" style="left:1244px;top:627px;width:1px;height:16px;background:#e3e3e3"></div><div class="a" style="left:1344px;top:627px;width:1px;height:16px;background:#e3e3e3"></div><div class="a" style="left:1443px;top:627px;width:1px;height:16px;background:#e3e3e3"></div><div class="a" style="left:1653px;top:627px;width:1px;height:16px;background:#e3e3e3"></div><div class="a" style="left:1863px;top:627px;width:1px;height:16px;background:#e3e3e3"></div><div class="a" style="left:43px;top:643px;width:1821px;height:1px;background:#e3e3e3"></div><div class="a" style="left:1444px;top:644px;width:209px;height:16px;background:#b8fdb3"></div><div class="a" style="left:1654px;top:644px;width:209px;height:16px;background:#b8fdb3"></div><div class="a t d" style="left:60px;top:644px;color:#333">Артемьева Елена Анатольевна</div><div class="a t d" style="left:336px;top:644px;color:#333">Первый заместитель генерального директора</div><div class="a t d" style="left:662px;top:644px;color:#333">Пятидневка</div><div class="a t d" style="left:907px;top:644px;color:#333">28 ноября 2024 г.</div><div class="a t d" style="left:1073px;top:644px;color:#333">8:00:00</div><div class="a t d" style="left:1248px;top:644px;color:#333">17:00:00</div><div class="a t d" style="left:1447px;top:644px;color:#333">Увольнение</div><div class="a t d" style="left:1657px;top:644px;color:#333">Увольнение</div><div class="a" style="left:332px;top:644px;width:1px;height:16px;background:#e3e3e3"></div><div class="a" style="left:658px;top:644px;width:1px;height:16px;background:#e3e3e3"></div><div class="a" style="left:903px;top:644px;width:1px;height:16px;background:#e3e3e3"></div><div class="a" style="left:1069px;top:644px;width:1px;height:16px;background:#e3e3e3"></div><div class="a" style="left:1157px;top:644px;width:1px;height:16px;background:#e3e3e3"></div><div class="a" style="left:1244px;top:644px;width:1px;height:16px;background:#e3e3e3"></div><div class="a" style="left:1344px;top:644px;width:1px;height:16px;background:#e3e3e3"></div><div class="a" style="left:1443px;top:644px;width:1px;height:16px;background:#e3e3e3"></div><div class="a" style="left:1653px;top:644px;width:1px;height:16px;background:#e3e3e3"></div><div class="a" style="left:1863px;top:644px;width:1px;height:16px;background:#e3e3e3"></div><div class="a" style="left:43px;top:660px;width:1821px;height:1px;background:#e3e3e3"></div><div class="a" style="left:1444px;top:661px;width:209px;height:16px;background:#87ceeb"></div><div class="a" style="left:1654px;top:661px;width:209px;height:16px;background:#fc7f4f"></div><div class="a t d" style="left:60px;top:661px;color:#333">Булатов Игорь Виленович</div><div class="a t d" style="left:336px;top:661px;color:#333">Генеральный директор</div><div class="a t d" style="left:662px;top:661px;color:#333">Пятидневка</div><div class="a t d" style="left:907px;top:661px;color:#333">28 ноября 2024 г.</div><div class="a t d" style="left:1073px;top:661px;color:#333">8:00:00</div><div class="a t d" style="left:1161px;top:661px;color:#333">7:54:09</div><div class="a t d" style="left:1248px;top:661px;color:#333">17:00:00</div><div class="a t d" style="left:1348px;top:661px;color:#f00">16:48:38</div><div class="a t d" style="left:1447px;top:661px;color:#333">Пришел вовремя</div><div class="a t d" style="left:1657px;top:661px;color:#333">Ушел раньше</div><div class="a" style="left:332px;top:661px;width:1px;height:16px;background:#e3e3e3"></div><div class="a" style="left:658px;top:661px;width:1px;height:16px;background:#e3e3e3"></div><div class="a" style="left:903px;top:661px;width:1px;height:16px;background:#e3e3e3"></div><div class="a" style="left:1069px;top:661px;width:1px;height:16px;background:#e3e3e3"></div><div class="a" style="left:1157px;top:661px;width:1px;height:16px;background:#e3e3e3"></div><div class="a" style="left:1244px;top:661px;width:1px;height:16px;background:#e3e3e3"></div><div class="a" style="left:1344px;top:661px;width:1px;height:16px;background:#e3e3e3"></div><div class="a" style="left:1443px;top:661px;width:1px;height:16px;background:#e3e3e3"></div><div class="a" style="left:1653px;top:661px;width:1px;height:16px;background:#e3e3e3"></div><div class="a" style="left:1863px;top:661px;width:1px;height:16px;background:#e3e3e3"></div><div class="a" style="left:43px;top:677px;width:1821px;height:1px;background:#e3e3e3"></div><div class="a" style="left:1444px;top:678px;width:209px;height:16px;background:#87ceeb"></div><div class="a" style="left:1654px;top:678px;width:209px;height:16px;background:#87ceeb"></div><div class="a t d" style="left:60px;top:678px;color:#333">Минчев Аристотель Борисович</div><div class="a t d" style="left:336px;top:678px;color:#333">Первый заместитель генерального директора</div><div class="a t d" style="left:662px;top:678px;color:#333">Пятидневка</div><div class="a t d" style="left:907px;top:678px;color:#333">28 ноября 2024 г.</div><div class="a t d" style="left:1073px;top:678px;color:#333">8:00:00</div><div class="a t d" style="left:1161px;top:678px;color:#333">7:55:50</div><div class="a t d" style="left:1248px;top:678px;color:#333">17:00:00</div><div class="a t d" style="left:1348px;top:678px;color:#333">17:00:36</div><div class="a t d" style="left:1447px;top:678px;color:#333">Пришел вовремя</div><div class="a t d" style="left:1657px;top:678px;color:#333">Ушел вовремя</div><div class="a" style="left:332px;top:678px;width:1px;height:16px;background:#e3e3e3"></div><div class="a" style="left:658px;top:678px;width:1px;height:16px;background:#e3e3e3"></div><div class="a" style="left:903px;top:678px;width:1px;height:16px;background:#e3e3e3"></div><div class="a" style="left:1069px;top:678px;width:1px;height:16px;background:#e3e3e3"></div><div class="a" style="left:1157px;top:678px;width:1px;height:16px;background:#e3e3e3"></div><div class="a" style="left:1244px;top:678px;width:1px;height:16px;background:#e3e3e3"></div><div class="a" style="left:1344px;top:678px;width:1px;height:16px;background:#e3e3e3"></div><div class="a" style="left:1443px;top:678px;width:1px;height:16px;background:#e3e3e3"></div><div class="a" style="left:1653px;top:678px;width:1px;height:16px;background:#e3e3e3"></div><div class="a" style="left:1863px;top:678px;width:1px;height:16px;background:#e3e3e3"></div><div class="a" style="left:43px;top:694px;width:1821px;height:1px;background:#e3e3e3"></div><div class="a" style="left:1444px;top:695px;width:209px;height:16px;background:#87ceeb"></div><div class="a" style="left:1654px;top:695px;width:209px;height:16px;background:#fc7f4f"></div><div class="a t d" style="left:60px;top:695px;color:#333">Папиров Папир Мансурович</div><div class="a t d" style="left:336px;top:695px;color:#333">Первый заместитель генерального директора</div><div class="a t d" style="left:662px;top:695px;color:#333">Пятидневка</div><div class="a t d" style="left:907px;top:695px;color:#333">28 ноября 2024 г.</div><div class="a t d" style="left:1073px;top:695px;color:#333">8:00:00</div><div class="a t d" style="left:1161px;top:695px;color:#333">7:58:50</div><div class="a t d" style="left:1248px;top:695px;color:#333">17:00:00</div><div class="a t d" style="left:1348px;top:695px;color:#f00">16:52:18</div><div class="a t d" style="left:1447px;top:695px;color:#333">Пришел вовремя</div><div class="a t d" style="left:1657px;top:695px;color:#333">Ушел раньше</div><div class="a" style="left:332px;top:695px;width:1px;height:16px;background:#e3e3e3"></div><div class="a" style="left:658px;top:695px;width:1px;height:16px;background:#e3e3e3"></div><div class="a" style="left:903px;top:695px;width:1px;height:16px;background:#e3e3e3"></div><div class="a" style="left:1069px;top:695px;width:1px;height:16px;background:#e3e3e3"></div><div class="a" style="left:1157px;top:695px;width:1px;height:16px;background:#e3e3e3"></div><div class="a" style="left:1244px;top:695px;width:1px;height:16px;background:#e3e3e3"></div><div class="a" style="left:1344px;top:695px;width:1px;height:16px;background:#e3e3e3"></div><div class="a" style="left:1443px;top:695px;width:1px;height:16px;background:#e3e3e3"></div><div class="a" style="left:1653px;top:695px;width:1px;height:16px;background:#e3e3e3"></div><div class="a" style="left:1863px;top:695px;width:1px;height:16px;background:#e3e3e3"></div><div class="a" style="left:43px;top:711px;width:1821px;height:1px;background:#e3e3e3"></div><div class="a t d" style="left:46px;top:712px;color:#333">Сектор дежурной службы</div><div class="a" style="left:43px;top:728px;width:1821px;height:1px;background:#e3e3e3"></div><div class="a" style="left:1444px;top:729px;width:209px;height:16px;background:#87ceeb"></div><div class="a" style="left:1654px;top:729px;width:209px;height:16px;background:#87ceeb"></div><div class="a t d" style="left:60px;top:729px;color:#333">Войцехович Игорь Борисович</div><div class="a t d" style="left:336px;top:729px;color:#333">Ведущий эксперт</div><div class="a t d" style="left:662px;top:729px;color:#333">Смена 1</div><div class="a t d" style="left:907px;top:729px;color:#333">28 ноября 2024 г.</div><div class="a t d" style="left:1073px;top:729px;color:#333">0:00:00</div><div class="a t d" style="left:1161px;top:729px;color:#333">23:55:50</div><div class="a t d" style="left:1248px;top:729px;color:#333">9:00:00</div><div class="a t d" style="left:1348px;top:729px;color:#333">16:50:53</div><div class="a t d" style="left:1447px;top:729px;color:#333">Пришел вовремя</div><div class="a t d" style="left:1657px;top:729px;color:#333">Ушел вовремя</div><div class="a" style="left:332px;top:729px;width:1px;height:16px;background:#e3e3e3"></div><div class="a" style="left:658px;top:729px;width:1px;height:16px;background:#e3e3e3"></div><div class="a" style="left:903px;top:729px;width:1px;height:16px;background:#e3e3e3"></div><div class="a" style="left:1069px;top:729px;width:1px;height:16px;background:#e3e3e3"></div><div class="a" style="left:1157px;top:729px;width:1px;height:16px;background:#e3e3e3"></div><div class="a" style="left:1244px;top:729px;width:1px;height:16px;background:#e3e3e3"></div><div class="a" style="left:1344px;top:729px;width:1px;height:16px;background:#e3e3e3"></div><div class="a" style="left:1443px;top:729px;width:1px;height:16px;background:#e3e3e3"></div><div class="a" style="left:1653px;top:729px;width:1px;height:16px;background:#e3e3e3"></div><div class="a" style="left:1863px;top:729px;width:1px;height:16px;background:#e3e3e3"></div><div class="a" style="left:43px;top:745px;width:1821px;height:1px;background:#e3e3e3"></div><div class="a" style="left:1444px;top:746px;width:209px;height:32px;background:#fc7f4f"></div><div class="a" style="left:1654px;top:746px;width:209px;height:32px;background:#87ceeb"></div><div class="a t d" style="left:60px;top:746px;color:#333">Матвиевский Григорий Маркович</div><div class="a t d" style="left:336px;top:746px;color:#333">Бригадир по перемещению сырья, полуфабрикатов<br>и готовой продукции в процессе производства</div><div class="a t d" style="left:662px;top:746px;color:#333">Смена 1</div><div class="a t d" style="left:907px;top:746px;color:#333">28 ноября 2024 г.</div><div class="a t d" style="left:1073px;top:746px;color:#333">0:00:00</div><div class="a t d" style="left:1161px;top:746px;color:#f00">0:01:51</div><div class="a t d" style="left:1248px;top:746px;color:#333">9:00:00</div><div class="a t d" style="left:1348px;top:746px;color:#333">9:07:11</div><div class="a t d" style="left:1447px;top:746px;color:#333">Опоздал</div><div class="a t d" style="left:1657px;top:746px;color:#333">Ушел вовремя</div><div class="a" style="left:332px;top:746px;width:1px;height:32px;background:#e3e3e3"></div><div class="a" style="left:658px;top:746px;width:1px;height:32px;background:#e3e3e3"></div><div class="a" style="left:903px;top:746px;width:1px;height:32px;background:#e3e3e3"></div><div class="a" style="left:1069px;top:746px;width:1px;height:32px;background:#e3e3e3"></div><div class="a" style="left:1157px;top:746px;width:1px;height:32px;background:#e3e3e3"></div><div class="a" style="left:1244px;top:746px;width:1px;height:32px;background:#e3e3e3"></div><div class="a" style="left:1344px;top:746px;width:1px;height:32px;background:#e3e3e3"></div><div class="a" style="left:1443px;top:746px;width:1px;height:32px;background:#e3e3e3"></div><div class="a" style="left:1653px;top:746px;width:1px;height:32px;background:#e3e3e3"></div><div class="a" style="left:1863px;top:746px;width:1px;height:32px;background:#e3e3e3"></div><div class="a" style="left:43px;top:778px;width:1821px;height:1px;background:#e3e3e3"></div><div class="a" style="left:1444px;top:779px;width:209px;height:16px;background:#87ceeb"></div><div class="a" style="left:1654px;top:779px;width:209px;height:16px;background:#fc7f4f"></div><div class="a t d" style="left:60px;top:779px;color:#333">Михейцева Наталия Анатольевна</div><div class="a t d" style="left:336px;top:779px;color:#333">Эксперт</div><div class="a t d" style="left:662px;top:779px;color:#333">Смена 2</div><div class="a t d" style="left:907px;top:779px;color:#333">28 ноября 2024 г.</div><div class="a t d" style="left:1073px;top:779px;color:#333">7:00:00</div><div class="a t d" style="left:1161px;top:779px;color:#333">6:48:13</div><div class="a t d" style="left:1248px;top:779px;color:#333">19:00:00</div><div class="a t d" style="left:1348px;top:779px;color:#f00">18:58:37</div><div class="a t d" style="left:1447px;top:779px;color:#333">Пришел вовремя</div><div class="a t d" style="left:1657px;top:779px;color:#333">Ушел раньше</div><div class="a" style="left:332px;top:779px;width:1px;height:16px;background:#e3e3e3"></div><div class="a" style="left:658px;top:779px;width:1px;height:16px;background:#e3e3e3"></div><div class="a" style="left:903px;top:779px;width:1px;height:16px;background:#e3e3e3"></div><div class="a" style="left:1069px;top:779px;width:1px;height:16px;background:#e3e3e3"></div><div class="a" style="left:1157px;top:779px;width:1px;height:16px;background:#e3e3e3"></div><div class="a" style="left:1244px;top:779px;width:1px;height:16px;background:#e3e3e3"></div><div class="a" style="left:1344px;top:779px;width:1px;height:16px;background:#e3e3e3"></div><div class="a" style="left:1443px;top:779px;width:1px;height:16px;background:#e3e3e3"></div><div class="a" style="left:1653px;top:779px;width:1px;height:16px;background:#e3e3e3"></div><div class="a" style="left:1863px;top:779px;width:1px;height:16px;background:#e3e3e3"></div><div class="a" style="left:43px;top:795px;width:1821px;height:1px;background:#e3e3e3"></div><div class="a" style="left:1444px;top:796px;width:209px;height:16px;background:#dcdcdc"></div><div class="a" style="left:1654px;top:796px;width:209px;height:16px;background:#dcdcdc"></div><div class="a t d" style="left:60px;top:796px;color:#333">Рязанова Елена Борисовна</div><div class="a t d" style="left:336px;top:796px;color:#333">Эксперт</div><div class="a t d" style="left:662px;top:796px;color:#333">Смена 3</div><div class="a t d" style="left:907px;top:796px;color:#333">28 ноября 2024 г.</div><div class="a t d" style="left:1447px;top:796px;color:#333">Выходной</div><div class="a t d" style="left:1657px;top:796px;color:#333">Выходной</div><div class="a" style="left:332px;top:796px;width:1px;height:16px;background:#e3e3e3"></div><div class="a" style="left:658px;top:796px;width:1px;height:16px;background:#e3e3e3"></div><div class="a" style="left:903px;top:796px;width:1px;height:16px;background:#e3e3e3"></div><div class="a" style="left:1069px;top:796px;width:1px;height:16px;background:#e3e3e3"></div><div class="a" style="left:1157px;top:796px;width:1px;height:16px;background:#e3e3e3"></div><div class="a" style="left:1244px;top:796px;width:1px;height:16px;background:#e3e3e3"></div><div class="a" style="left:1344px;top:796px;width:1px;height:16px;background:#e3e3e3"></div><div class="a" style="left:1443px;top:796px;width:1px;height:16px;background:#e3e3e3"></div><div class="a" style="left:1653px;top:796px;width:1px;height:16px;background:#e3e3e3"></div><div class="a" style="left:1863px;top:796px;width:1px;height:16px;background:#e3e3e3"></div><div class="a" style="left:43px;top:812px;width:1821px;height:1px;background:#e3e3e3"></div><div class="a t d" style="left:46px;top:813px;color:#333">Сектор развития персонала</div><div class="a" style="left:43px;top:829px;width:1821px;height:1px;background:#e3e3e3"></div><div class="a" style="left:1444px;top:830px;width:209px;height:16px;background:#fc7f4f"></div><div class="a" style="left:1654px;top:830px;width:209px;height:16px;background:#fc7f4f"></div><div class="a t d" style="left:60px;top:830px;color:#333">Габровская Светлана Марковна</div><div class="a t d" style="left:336px;top:830px;color:#333">Начальник сектора</div><div class="a t d" style="left:662px;top:830px;color:#333">Пятидневка</div><div class="a t d" style="left:907px;top:830px;color:#333">28 ноября 2024 г.</div><div class="a t d" style="left:1073px;top:830px;color:#333">8:00:00</div><div class="a t d" style="left:1161px;top:830px;color:#f00">8:08:37</div><div class="a t d" style="left:1248px;top:830px;color:#333">17:00:00</div><div class="a t d" style="left:1348px;top:830px;color:#f00">16:46:06</div><div class="a t d" style="left:1447px;top:830px;color:#333">Опоздал</div><div class="a t d" style="left:1657px;top:830px;color:#333">Ушел раньше</div><div class="a" style="left:332px;top:830px;width:1px;height:16px;background:#e3e3e3"></div><div class="a" style="left:658px;top:830px;width:1px;height:16px;background:#e3e3e3"></div><div class="a" style="left:903px;top:830px;width:1px;height:16px;background:#e3e3e3"></div><div class="a" style="left:1069px;top:830px;width:1px;height:16px;background:#e3e3e3"></div><div class="a" style="left:1157px;top:830px;width:1px;height:16px;background:#e3e3e3"></div><div class="a" style="left:1244px;top:830px;width:1px;height:16px;background:#e3e3e3"></div><div class="a" style="left:1344px;top:830px;width:1px;height:16px;background:#e3e3e3"></div><div class="a" style="left:1443px;top:830px;width:1px;height:16px;background:#e3e3e3"></div><div class="a" style="left:1653px;top:830px;width:1px;height:16px;background:#e3e3e3"></div><div class="a" style="left:1863px;top:830px;width:1px;height:16px;background:#e3e3e3"></div><div class="a" style="left:43px;top:846px;width:1821px;height:1px;background:#e3e3e3"></div><div class="a t d" style="left:46px;top:847px;color:#333">Сметно-штатный отдел</div><div class="a" style="left:43px;top:863px;width:1821px;height:1px;background:#e3e3e3"></div><div class="a" style="left:13px;top:306px;width:11px;height:11px;border:1px solid #b9b9b9;border-radius:2px;background:linear-gradient(#fff,#eee)"></div><div class="a" style="left:16px;top:312px;width:7px;height:1px;background:#333"></div><div class="a" style="left:19px;top:319px;width:1px;height:52px;background:#9a9a9a"></div><div class="a" style="left:19px;top:371px;width:23px;height:1px;background:#9a9a9a"></div><div class="a" style="left:13px;top:374px;width:11px;height:11px;border:1px solid #b9b9b9;border-radius:2px;background:linear-gradient(#fff,#eee)"></div><div class="a" style="left:16px;top:380px;width:7px;height:1px;background:#333"></div><div class="a" style="left:19px;top:387px;width:1px;height:69px;background:#9a9a9a"></div><div class="a" style="left:19px;top:456px;width:23px;height:1px;background:#9a9a9a"></div><div class="a" style="left:13px;top:459px;width:11px;height:11px;border:1px solid #b9b9b9;border-radius:2px;background:linear-gradient(#fff,#eee)"></div><div class="a" style="left:16px;top:465px;width:7px;height:1px;background:#333"></div><div class="a" style="left:19px;top:472px;width:1px;height:35px;background:#9a9a9a"></div><div class="a" style="left:19px;top:507px;width:23px;height:1px;background:#9a9a9a"></div><div class="a" style="left:13px;top:510px;width:11px;height:11px;border:1px solid #b9b9b9;border-radius:2px;background:linear-gradient(#fff,#eee)"></div><div class="a" style="left:16px;top:516px;width:7px;height:1px;background:#333"></div><div class="a" style="left:19px;top:523px;width:1px;height:86px;background:#9a9a9a"></div><div class="a" style="left:19px;top:609px;width:23px;height:1px;background:#9a9a9a"></div><div class="a" style="left:13px;top:612px;width:11px;height:11px;border:1px solid #b9b9b9;border-radius:2px;background:linear-gradient(#fff,#eee)"></div><div class="a" style="left:16px;top:618px;width:7px;height:1px;background:#333"></div><div class="a" style="left:19px;top:625px;width:1px;height:86px;background:#9a9a9a"></div><div class="a" style="left:19px;top:711px;width:23px;height:1px;background:#9a9a9a"></div><div class="a" style="left:13px;top:714px;width:11px;height:11px;border:1px solid #b9b9b9;border-radius:2px;background:linear-gradient(#fff,#eee)"></div><div class="a" style="left:16px;top:720px;width:7px;height:1px;background:#333"></div><div class="a" style="left:19px;top:727px;width:1px;height:85px;background:#9a9a9a"></div><div class="a" style="left:19px;top:812px;width:23px;height:1px;background:#9a9a9a"></div><div class="a" style="left:13px;top:815px;width:11px;height:11px;border:1px solid #b9b9b9;border-radius:2px;background:linear-gradient(#fff,#eee)"></div><div class="a" style="left:16px;top:821px;width:7px;height:1px;background:#333"></div><div class="a" style="left:19px;top:828px;width:1px;height:18px;background:#9a9a9a"></div><div class="a" style="left:19px;top:846px;width:23px;height:1px;background:#9a9a9a"></div><div class="a" style="left:13px;top:849px;width:11px;height:11px;border:1px solid #b9b9b9;border-radius:2px;background:linear-gradient(#fff,#eee)"></div><div class="a" style="left:16px;top:855px;width:7px;height:1px;background:#333"></div><div class="a" style="left:19px;top:862px;width:1px;height:1px;background:#9a9a9a"></div><div class="a" style="left:1863px;top:244px;width:1px;height:620px;background:#e3e3e3"></div><svg class="a" style="left:1886px;top:226px;" width="8" height="6" viewBox="0 0 8 6"><path d="M0.5 5 L4 1 L7.5 5 Z" fill="#bdbdbd"/></svg><div class="a" style="left:1886px;top:241px;width:8px;height:600px;background:#d6d6d6;border-radius:4px"></div><div class="a" style="left:1886px;top:241px;width:8px;height:363px;background:#9a9a9a;border-radius:4px"></div><svg class="a" style="left:1886px;top:850px;" width="8" height="6" viewBox="0 0 8 6"><path d="M0.5 1 L4 5 L7.5 1 Z" fill="#444"/></svg><svg class="a" style="left:19px;top:867px;" width="6" height="8" viewBox="0 0 6 8"><path d="M5 0.5 L1 4 L5 7.5 Z" fill="#bdbdbd"/></svg><div class="a" style="left:33px;top:867px;width:1828px;height:7px;background:#d6d6d6;border-radius:4px"></div><div class="a" style="left:33px;top:867px;width:1634px;height:7px;background:#9a9a9a;border-radius:4px"></div><svg class="a" style="left:1868px;top:867px;" width="6" height="8" viewBox="0 0 6 8"><path d="M1 0.5 L5 4 L1 7.5 Z" fill="#444"/></svg></body></html>
